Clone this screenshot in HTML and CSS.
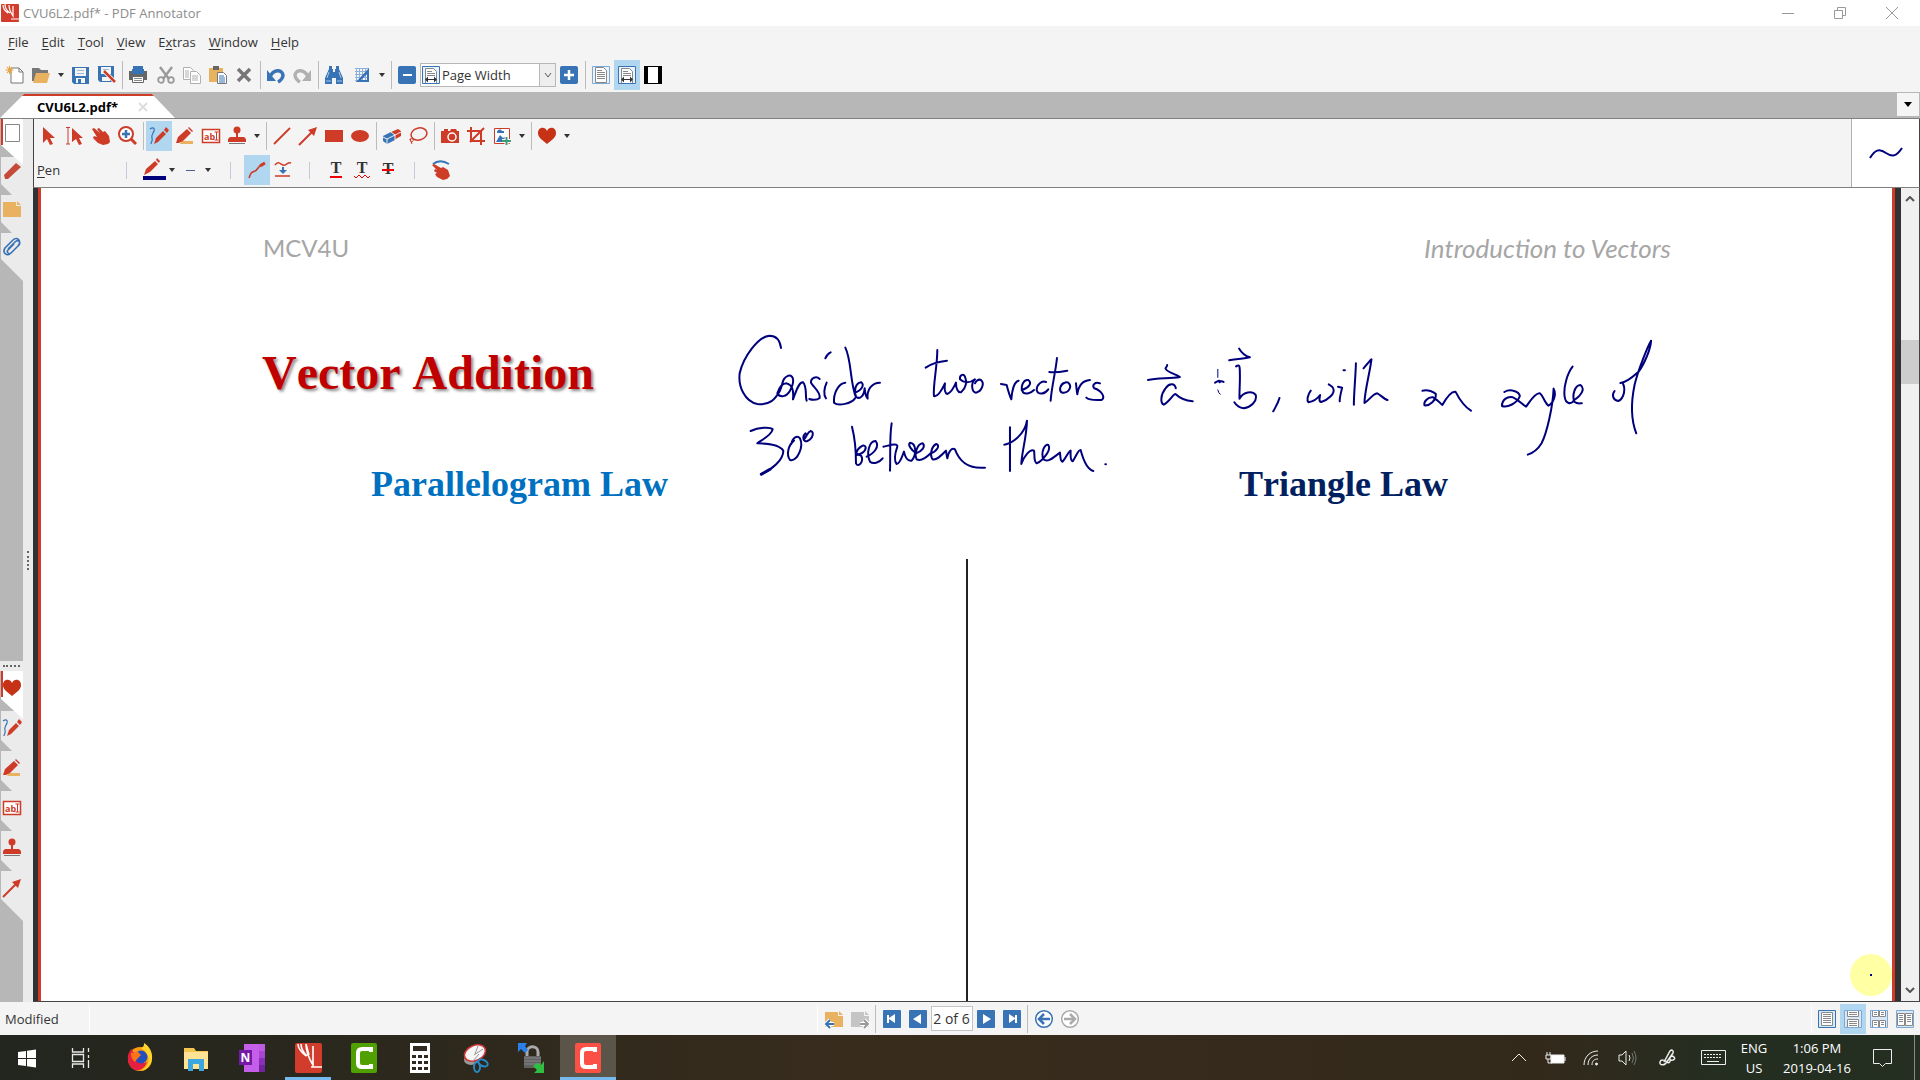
FILE: index.html
```html
<!DOCTYPE html>
<html lang="en">
<head>
<meta charset="utf-8">
<title>CVU6L2.pdf* - PDF Annotator</title>
<link rel="stylesheet" href="styles.css">
</head>
<body>
<svg class="sprite" aria-hidden="true">
  <symbol id="app" viewBox="0 0 20 20"><rect x="1" y="1" width="18" height="18" rx="1" fill="#d13c2c"/><path d="M3 2c0 4 2 6 5 8M5 1c0 4 2 7 5 9M9 2c0 5 2 8 4 11V3M11 16h8" fill="none" stroke="#fff" stroke-width="1.200"/></symbol>
  <symbol id="new" viewBox="0 0 20 20"><path d="M6 3h8l4 4v11H6z" fill="#fff" stroke="#777"/><path d="M14 3v4h4" fill="none" stroke="#777"/><path d="M4.500 1v8M.5 5h8M2 2l5 6M7 2L2 8" stroke="#e8a33a" stroke-width="1.100"/></symbol>
  <symbol id="open" viewBox="0 0 20 20"><path d="M1 3h7l2 2h7v4H6L3 16H1z" fill="#777"/><path d="M5 8h14l-3 10H2z" fill="#e8b261"/></symbol>
  <symbol id="save" viewBox="0 0 20 20"><path d="M2 2h17v17H4l-2-2z" fill="#3773b5"/><path d="M5 3h11v8H5zM6 13h9v5H6z" fill="#f4f4f4"/><path d="M7 5.500h7M7 8.500h7" stroke="#9bb8d8"/><path d="M8 14h3v4H8z" fill="#3773b5"/></symbol>
  <symbol id="saveas" viewBox="0 0 20 20"><path d="M2 1h16v16H4l-2-2z" fill="#3773b5"/><path d="M5 2h10v7H5zM6 12h8v4H6z" fill="#f4f4f4"/><path d="M7 4.500h6" stroke="#9bb8d8"/><path d="M9 7l9 9" stroke="#fff" stroke-width="4"/><path d="M8 6l11 11" stroke="#ce3b27" stroke-width="2.500"/></symbol>
  <symbol id="print" viewBox="0 0 20 20"><path d="M5 1h10v4H5z" fill="#3773b5"/><path d="M1 6h18v9H1z" fill="#666"/><path d="M4 4h12v5H4z" fill="#3773b5"/><path d="M4.500 11.500h11v6h-11z" fill="#fff" stroke="#666"/><path d="M6 13.500h8M6 15.500h8" stroke="#888"/></symbol>
  <symbol id="cut" viewBox="0 0 20 20"><path d="M4 2l9 12M16 2L7 14" stroke="#999" stroke-width="2.400"/><circle cx="5" cy="15" r="2.800" fill="none" stroke="#999" stroke-width="1.800"/><circle cx="15" cy="15" r="2.800" fill="none" stroke="#999" stroke-width="1.800"/></symbol>
  <symbol id="copy" viewBox="0 0 20 20"><g fill="#fff" stroke="#b0b0b0"><path d="M1.500 2.500h7l3 3v9h-10z"/><path d="M8.500 6.500h6l4 4v8h-10z"/></g><path d="M3 6h4M3 8h4M3 10h4M3 12h4M10 11h6M10 13h6M10 15h6" stroke="#b0b0b0"/></symbol>
  <symbol id="paste" viewBox="0 0 20 20"><path d="M1 3h14v14H1z" fill="#e8b261"/><path d="M5 1h6v4H5z" fill="#666"/><path d="M9.500 7.500h6l3 3v8h-9z" fill="#fff" stroke="#777"/><path d="M11 11h5M11 13h6M11 15h6M11 17h6" stroke="#3773b5"/></symbol>
  <symbol id="delete" viewBox="0 0 20 20"><path d="M4 4l12 12M16 4L4 16" stroke="#777" stroke-width="3.500"/></symbol>
  <symbol id="undo" viewBox="0 0 20 20"><path d="M4 12C7 4 16 4 17 10c0 3-3 6-5 7" fill="none" stroke="#3773b5" stroke-width="3.500"/><path d="M1 5v11h9z" fill="#3773b5"/></symbol>
  <symbol id="redo" viewBox="0 0 20 20"><path d="M16 12C13 4 4 4 3 10c0 3 3 6 5 7" fill="none" stroke="#b0b0b0" stroke-width="3.500"/><path d="M19 5v11h-9z" fill="#b0b0b0"/></symbol>
  <symbol id="find" viewBox="0 0 20 20"><path d="M5 1h3v3h1v3h2V4h1V1h3v3l4 9v6h-7v-6H8v6H1v-6l4-9z" fill="#3773b5"/><path d="M3 13l2-6M17 13l-2-6M2 16h5M13 16h5" stroke="#a9c6e6"/></symbol>
  <symbol id="grid" viewBox="0 0 20 20"><path d="M3 3.500h14M3 6.500h14M3 9.500h14M3 12.500h14M3 15.500h14M4.500 3v14M7.500 3v14M10.500 3v14M13.500 3v14" stroke="#8fb0d8"/><path d="M17 3v14H4zm-2 6l-6 6h6z" fill="#3773b5" fill-rule="evenodd"/></symbol>
  <symbol id="minus" viewBox="0 0 20 20"><rect x="1" y="1" width="18" height="18" rx="2" fill="#3773b5"/><path d="M6 10h9" stroke="#fff" stroke-width="2"/></symbol>
  <symbol id="plus" viewBox="0 0 20 20"><rect x="1" y="1" width="18" height="18" rx="2" fill="#3773b5"/><path d="M5 10h10M10 5v10" stroke="#fff" stroke-width="2.500"/></symbol>
  <symbol id="pwidth" viewBox="0 0 20 20"><path d="M1.500 1.500h17v17h-17z" fill="#eaf2fa" stroke="#3773b5"/><path d="M4.500 18V3.500h8l3 3V18" fill="#fff" stroke="#888"/><path d="M6 6.500h5M6 8.500h8M6 10.500h8" stroke="#888"/><path d="M5 14.500h10" stroke="#333"/><path d="M4 14.500l3-3v6zM16 14.500l-3-3v6z" fill="#333"/></symbol>
  <symbol id="ppage" viewBox="0 0 20 20"><path d="M1.500 1.500h17v17h-17z" fill="#eaf2fa" stroke="#7ea9d6"/><path d="M4.500 2.500h8l3 3v12h-11z" fill="#fff" stroke="#888"/><path d="M6 5.500h5M6 7.500h8M6 9.500h8M6 11.500h8M6 13.500h8" stroke="#888"/></symbol>
  <symbol id="pfull" viewBox="0 0 20 20"><path d="M1 1h18v18H1z"/><path d="M5 2h10v16H5z" fill="#fff"/></symbol>
  <symbol id="down" viewBox="0 0 8 8"><path d="M1 2h6L4 6z" fill="#333"/></symbol>
  <symbol id="cursor" viewBox="0 0 20 20"><path d="M4 1l12 11H11l3 6-3 1-3-6-4 4z" fill="#ce3b27"/></symbol>
  <symbol id="tcursor" viewBox="0 0 20 20"><path d="M1 1.500h4M3 1v17M1 18h4" stroke="#ce3b27"/><path d="M7 2l11 10h-4l3 6-3 1-3-6-4 3z" fill="#ce3b27"/></symbol>
  <symbol id="hand" viewBox="0 0 20 20"><path d="M1 3l2-1 6 5-3-4 2-1 4 4 2-1 4 5 1 6-2 2-5 1-5-2-5-5 1-2 3 1z" fill="#ce3b27"/></symbol>
  <symbol id="zoomin" viewBox="0 0 20 20"><circle cx="9" cy="8" r="7" fill="#fff" stroke="#ce3b27" stroke-width="2"/><path d="M14 13l5 5" stroke="#ce3b27" stroke-width="3"/><path d="M5 8h8M9 4v8" stroke="#3773b5" stroke-width="2.500"/></symbol>
  <symbol id="pen" viewBox="0 0 20 20"><path d="M1 3c3-2 5-1 4 2s-3 4-2 7-1 4-1 6" fill="none" stroke="#3773b5" stroke-width="1.200"/><path d="M5 18l2-6 7-7 3 3-8 8zM15 4l2-3 3 3-2 3z" fill="#ce3b27"/></symbol>
  <symbol id="marker" viewBox="0 0 20 20"><path d="M7 15h11v3H5z" fill="#e8b261"/><path d="M1 17l2-6 9-8 4 4-8 8-4 2zM13 2l1-1 4 4-1 1z" fill="#ce3b27"/></symbol>
  <symbol id="abl" viewBox="0 0 20 20"><rect x="1.500" y="3.500" width="17" height="13" fill="#fff" stroke="#ce3b27" stroke-width="1.500"/><text x="3" y="14" font-size="9" font-weight="700" fill="#ce3b27">ab</text><path d="M13.500 6h4M15.500 6v8M13.500 14h4" stroke="#ce3b27"/></symbol>
  <symbol id="stamp" viewBox="0 0 20 20"><circle cx="10" cy="4" r="3.500" fill="#ce3b27"/><path d="M9 6h2v5h6l2 2v3H1v-3l2-2h6z" fill="#ce3b27"/><path d="M2 17.500h16" stroke="#777"/></symbol>
  <symbol id="line" viewBox="0 0 20 20"><path d="M2 18L18 2" stroke="#ce3b27" stroke-width="1.800"/></symbol>
  <symbol id="arrow" viewBox="0 0 20 20"><path d="M1 19L15 5" stroke="#ce3b27" stroke-width="2"/><path d="M19 1l-3 9-6-6z" fill="#ce3b27"/></symbol>
  <symbol id="rect" viewBox="0 0 20 20"><path d="M1 4h18v12H1z" fill="#ce3b27"/></symbol>
  <symbol id="ellipse" viewBox="0 0 20 20"><ellipse cx="10" cy="10" rx="9" ry="6" fill="#ce3b27"/></symbol>
  <symbol id="eraser" viewBox="0 0 20 20"><path d="M9 6l7-3 3 2v5l-7 4-3-3z" fill="#ce3b27"/><path d="M1 10l8-4 4 3v5l-8 4-4-3z" fill="#3773b5"/><path d="M1 11l4 2v5M5 13l14-7M9 6l4 3v5" fill="none" stroke="#fff" stroke-width=".9"/></symbol>
  <symbol id="lasso" viewBox="0 0 20 20"><ellipse cx="11" cy="8" rx="8" ry="6" transform="rotate(-15 11 8)" fill="none" stroke="#ce3b27" stroke-width="1.500"/><path d="M2 13c2-1 4 0 3 2s-3 0-3-2l2 5" fill="none" stroke="#ce3b27"/></symbol>
  <symbol id="camera" viewBox="0 0 20 20"><path d="M1 5h3V3h4v2h2l1-2h5l1 2h2v12H1z" fill="#ce3b27"/><circle cx="12" cy="11" r="4" fill="#ce3b27" stroke="#fff" stroke-width="1.500"/></symbol>
  <symbol id="crop" viewBox="0 0 20 20"><path d="M1 5h14v14M5 1v14h14M4 16L18 2" fill="none" stroke="#ce3b27" stroke-width="2"/></symbol>
  <symbol id="image" viewBox="0 0 20 20"><path d="M2.500 2.500h15v15h-15z" fill="#fff" stroke="#ce3b27"/><path d="M4 16l4-7 3 3 3-2 2 3v3zM5 6c1-3 4-3 5-1h2v2H5z" fill="#3773b5"/><path d="M10 15h9M14.500 10v9" stroke="#fff" stroke-width="4"/><path d="M10 15h9M14.500 11v8" stroke="#3a9d78" stroke-width="2"/></symbol>
  <symbol id="heart" viewBox="0 0 20 20"><path d="M10 18C4 13 1 11 1 7c0-6 7-7 9-2 2-5 9-4 9 2 0 4-3 6-9 11z" fill="#c53216"/></symbol>
  <symbol id="colorpen" viewBox="0 0 24 24"><path d="M2 17l2-6 9-8 3 3-8 8zM14 2l1-2 3 3-1 2z" fill="#ce3b27"/><path d="M1 18h23v4H1z" fill="#00007c"/></symbol>
  <symbol id="dash" viewBox="0 0 20 20"><path d="M6 10.500h9" stroke="#4a5f92"/></symbol>
  <symbol id="curve" viewBox="0 0 20 20"><path d="M2 18c2-6 3-6 6-7s3-6 9-8" fill="none" stroke="#ce3b27" stroke-width="1.600"/><path d="M13 6l5-3" stroke="#ce3b27" stroke-width="3"/></symbol>
  <symbol id="smooth" viewBox="0 0 20 20"><path d="M2 5c4-6 7 2 10 0 2-1 4-3 6-2M2 16h15" fill="none" stroke="#ce3b27" stroke-width="1.500"/><path d="M9 7h2v3h3l-4 4-4-4h3z" fill="#3773b5"/></symbol>
  <symbol id="tline" viewBox="0 0 20 20"><text class="serif" x="10" y="13" font-size="16" text-anchor="middle" fill="#333">T</text><path d="M4 17h12" stroke="#e00" stroke-width="2"/></symbol>
  <symbol id="twave" viewBox="0 0 20 20"><text class="serif" x="10" y="13" font-size="16" text-anchor="middle" fill="#333">T</text><path d="M2 16l2 2 3-3 3 3 3-3 3 3 2-2" fill="none" stroke="#e00"/></symbol>
  <symbol id="tstrike" viewBox="0 0 20 20"><text class="serif" x="10" y="14" font-size="16" text-anchor="middle" fill="#333">T</text><path d="M4 10h12" stroke="#e00" stroke-width="2"/></symbol>
  <symbol id="touch" viewBox="0 0 20 20"><path d="M2 4c5-4 11-3 16 0" fill="none" stroke="#3773b5" stroke-width="2"/><path d="M1 5l2-1 7 4 2-1 5 3 2 6-3 3-4 1-6-3-2-3 2-1-3-2 1-2 2 1z" fill="#ce3b27"/></symbol>
  <symbol id="page" viewBox="0 0 20 20"><path d="M3.500 1.500h14v17h-14z" fill="#fff" stroke="#888"/></symbol>
  <symbol id="bookmark" viewBox="0 0 20 20"><path d="M2 14L14 2l5 4L6 18H3z" fill="#c54a38"/></symbol>
  <symbol id="note" viewBox="0 0 20 20"><path d="M1 3h13v4h5v11H1z" fill="#e8b261"/><path d="M15 2l4 4h-4z" fill="#e8b261"/></symbol>
  <symbol id="clip" viewBox="0 0 20 20"><path d="M6 12l7-7c3-3 6 0 4 3l-8 8c-4 4-9 0-6-5l8-8c4-4 9 1 5 6l-7 7c-2 2-5-1-3-3l6-6" fill="none" stroke="#3773b5" stroke-width="1.600"/></symbol>
  <symbol id="noteback" viewBox="0 0 20 20"><path d="M1 3h13v4h5v11H1z" fill="#e8b261"/><path d="M15 2l4 4h-4z" fill="#e8b261"/><path d="M10 15H3M6 11l-4 4 4 4" fill="none" stroke="#fff" stroke-width="4"/><path d="M10 15H3M6 11l-4 4 4 4" fill="none" stroke="#3773b5" stroke-width="2"/></symbol>
  <symbol id="notefwd" viewBox="0 0 20 20"><path d="M1 3h13v4h5v11H1z" fill="#c4c4c4"/><path d="M15 2l4 4h-4z" fill="#c4c4c4"/><path d="M10 15h7M14 11l4 4-4 4" fill="none" stroke="#fff" stroke-width="4"/><path d="M10 15h7M14 11l4 4-4 4" fill="none" stroke="#999" stroke-width="2"/></symbol>
  <symbol id="first" viewBox="0 0 20 20"><rect x="1" y="1" width="18" height="18" rx="1" fill="#3773b5"/><path d="M5 6h2v3l6-4v9l-6-4v4H5z" fill="#fff"/></symbol>
  <symbol id="prev" viewBox="0 0 20 20"><rect x="1" y="1" width="18" height="18" rx="1" fill="#3773b5"/><path d="M5 10l8-5v10z" fill="#fff"/></symbol>
  <symbol id="next" viewBox="0 0 20 20"><rect x="1" y="1" width="18" height="18" rx="1" fill="#3773b5"/><path d="M15 10L7 5v10z" fill="#fff"/></symbol>
  <symbol id="last" viewBox="0 0 20 20"><rect x="1" y="1" width="18" height="18" rx="1" fill="#3773b5"/><path d="M15 6h-2v3L7 5v9l6-4v4h2z" fill="#fff"/></symbol>
  <symbol id="back" viewBox="0 0 20 20"><circle cx="10" cy="10" r="8.300" fill="#fff" stroke="#3773b5" stroke-width="1.500"/><path d="M16 10H6M10 5l-5 5 5 5" fill="none" stroke="#3773b5" stroke-width="2.500"/></symbol>
  <symbol id="fwd" viewBox="0 0 20 20"><circle cx="10" cy="10" r="8.300" fill="#fff" stroke="#aaa" stroke-width="1.500"/><path d="M4 10h10M10 5l5 5-5 5" fill="none" stroke="#aaa" stroke-width="2.500"/></symbol>
  <symbol id="v1" viewBox="0 0 20 20"><path d="M1.500 1.500h17v17h-17z" fill="#d9e8f6" stroke="#3773b5"/><path d="M4.500 3.500h11v13h-11z" fill="#fff" stroke="#888"/><path d="M6 5.500h8M6 7.500h8M6 9.500h8M6 11.500h8M6 13.500h8" stroke="#888"/></symbol>
  <symbol id="v2" viewBox="0 0 20 20"><path d="M1.500 1.500h17v17h-17z" fill="#d9e8f6" stroke="#7ea9d6"/><path d="M4.500 2v5.500h11V2M4.500 18v-7.500h11V18" fill="#fff" stroke="#888"/><path d="M6 3.500h8M6 5.500h8M6 12.500h8M6 14.500h8M6 16.500h8" stroke="#888"/></symbol>
  <symbol id="v3" viewBox="0 0 20 20"><path d="M1.500 1.500h17v17h-17z" fill="#d9e8f6" stroke="#7ea9d6"/><path d="M3.500 2v5.500h6V2M10.500 2v5.500h6V2M3.500 18v-6.500h6V18M10.500 18v-6.500h6V18" fill="#fff" stroke="#888"/><path d="M5 3.500h3M12 3.500h3M5 5.500h3M12 5.500h3M5 13.500h3M12 13.500h3M5 15.500h3M12 15.500h3" stroke="#888"/></symbol>
  <symbol id="v4" viewBox="0 0 20 20"><path d="M1.500 1.500h17v17h-17z" fill="#d9e8f6" stroke="#7ea9d6"/><path d="M2.500 4.500h7v12h-7zM10.500 4.500h7v12h-7z" fill="#fff" stroke="#888"/><path d="M4 6.500h4M4 8.500h4M4 10.500h4M4 12.500h4M12 6.500h4M12 8.500h4M12 10.500h4M12 12.500h4" stroke="#888"/></symbol>
</svg>

<header class="titlebar">
  <svg class="ico"><use href="#app"/></svg>
  <span class="title">CVU6L2.pdf* - PDF Annotator</span>
  <div class="winbtns">
    <button aria-label="Minimize"><svg viewBox="0 0 12 12"><path d="M0 6.500h12"/></svg></button>
    <button aria-label="Restore"><svg viewBox="0 0 12 12"><path d="M.5 3.500h8v8h-8zM3.500 3V.5h8v8H9"/></svg></button>
    <button aria-label="Close"><svg viewBox="0 0 12 12"><path d="M0 0l12 12M12 0L0 12"/></svg></button>
  </div>
</header>

<nav class="menubar">
  <button><u>F</u>ile</button><button><u>E</u>dit</button><button><u>T</u>ool</button><button><u>V</u>iew</button><button>E<u>x</u>tras</button><button><u>W</u>indow</button><button><u>H</u>elp</button>
</nav>

<div class="toolbar main-tools">
  <button class="btn" aria-label="New"><svg class="ico"><use href="#new"/></svg></button>
  <button class="btn" aria-label="Open"><svg class="ico"><use href="#open"/></svg></button>
  <button class="drop" aria-label="Recent files"><svg><use href="#down"/></svg></button>
  <button class="btn" aria-label="Save"><svg class="ico"><use href="#save"/></svg></button>
  <button class="btn" aria-label="Save as"><svg class="ico"><use href="#saveas"/></svg></button>
  <i class="sep"></i>
  <button class="btn gap" aria-label="Print"><svg class="ico"><use href="#print"/></svg></button>
  <button class="btn" aria-label="Cut"><svg class="ico"><use href="#cut"/></svg></button>
  <button class="btn" aria-label="Copy"><svg class="ico"><use href="#copy"/></svg></button>
  <button class="btn" aria-label="Paste"><svg class="ico"><use href="#paste"/></svg></button>
  <button class="btn" aria-label="Delete"><svg class="ico"><use href="#delete"/></svg></button>
  <i class="sep"></i>
  <button class="btn" aria-label="Undo"><svg class="ico"><use href="#undo"/></svg></button>
  <button class="btn" aria-label="Redo"><svg class="ico"><use href="#redo"/></svg></button>
  <i class="sep"></i>
  <button class="btn gap" aria-label="Find"><svg class="ico"><use href="#find"/></svg></button>
  <button class="btn" aria-label="Background"><svg class="ico"><use href="#grid"/></svg></button>
  <button class="drop" aria-label="Background options"><svg><use href="#down"/></svg></button>
  <i class="sep"></i>
  <button class="btn" aria-label="Zoom out"><svg class="ico"><use href="#minus"/></svg></button>
  <div class="combo">
    <svg class="ico"><use href="#pwidth"/></svg>
    <select aria-label="Zoom"><option>Page Width</option></select>
    <span class="combo-arrow"><svg viewBox="0 0 8 8"><path d="M1 2l3 4 3-4"/></svg></span>
  </div>
  <button class="btn" aria-label="Zoom in"><svg class="ico"><use href="#plus"/></svg></button>
  <i class="sep"></i>
  <button class="btn" aria-label="Full page"><svg class="ico"><use href="#ppage"/></svg></button>
  <button class="btn on" aria-label="Page width"><svg class="ico"><use href="#pwidth"/></svg></button>
  <button class="btn" aria-label="Full screen"><svg class="ico"><use href="#pfull"/></svg></button>
</div>

<div class="tabs">
  <div class="tab"><span>CVU6L2.pdf*</span><button aria-label="Close tab"><svg viewBox="0 0 10 10"><path d="M1 1l8 8M9 1L1 9"/></svg></button></div>
  <button class="tablist" aria-label="Document list"><svg viewBox="0 0 10 6"><path d="M1 0h8L5 5z"/></svg></button>
</div>

<div class="work">
  <aside class="side">
    <div class="rail">
      <button class="stab sel" aria-label="Pages"><svg class="ico"><use href="#page"/></svg></button>
      <button class="stab" aria-label="Bookmarks"><svg class="ico"><use href="#bookmark"/></svg></button>
      <button class="stab" aria-label="Annotations"><svg class="ico"><use href="#note"/></svg></button>
      <button class="stab end" aria-label="Attachments"><svg class="ico"><use href="#clip"/></svg></button>
      <div class="fill"></div>
      <div class="hgrip"></div>
      <div class="favs">
        <button class="stab sel" aria-label="Favorites"><svg class="ico"><use href="#heart"/></svg></button>
        <button class="stab" aria-label="Pen"><svg class="ico"><use href="#pen"/></svg></button>
        <button class="stab" aria-label="Marker"><svg class="ico"><use href="#marker"/></svg></button>
        <button class="stab" aria-label="Text"><svg class="ico"><use href="#abl"/></svg></button>
        <button class="stab" aria-label="Stamp"><svg class="ico"><use href="#stamp"/></svg></button>
        <button class="stab end" aria-label="Arrow"><svg class="ico"><use href="#arrow"/></svg></button>
      </div>
    </div>
    <div class="splitter"><i></i></div>
  </aside>

  <main class="main">
    <div class="toolpanel">
      <div class="rows">
        <div class="toolbar">
          <button class="btn" aria-label="Select"><svg class="ico"><use href="#cursor"/></svg></button>
          <button class="btn" aria-label="Select text"><svg class="ico"><use href="#tcursor"/></svg></button>
          <button class="btn" aria-label="Pan"><svg class="ico"><use href="#hand"/></svg></button>
          <button class="btn" aria-label="Zoom"><svg class="ico"><use href="#zoomin"/></svg></button>
          <i class="sep"></i>
          <button class="btn on" aria-label="Pen"><svg class="ico"><use href="#pen"/></svg></button>
          <button class="btn" aria-label="Marker"><svg class="ico"><use href="#marker"/></svg></button>
          <button class="btn" aria-label="Text"><svg class="ico"><use href="#abl"/></svg></button>
          <button class="btn" aria-label="Stamp"><svg class="ico"><use href="#stamp"/></svg></button>
          <button class="drop" aria-label="Stamp options"><svg><use href="#down"/></svg></button>
          <i class="sep"></i>
          <button class="btn" aria-label="Line"><svg class="ico"><use href="#line"/></svg></button>
          <button class="btn" aria-label="Arrow"><svg class="ico"><use href="#arrow"/></svg></button>
          <button class="btn" aria-label="Rectangle"><svg class="ico"><use href="#rect"/></svg></button>
          <button class="btn" aria-label="Ellipse"><svg class="ico"><use href="#ellipse"/></svg></button>
          <i class="sep"></i>
          <button class="btn" aria-label="Eraser"><svg class="ico"><use href="#eraser"/></svg></button>
          <button class="btn" aria-label="Lasso"><svg class="ico"><use href="#lasso"/></svg></button>
          <i class="sep"></i>
          <button class="btn" aria-label="Snapshot"><svg class="ico"><use href="#camera"/></svg></button>
          <button class="btn" aria-label="Crop"><svg class="ico"><use href="#crop"/></svg></button>
          <button class="btn" aria-label="Insert image"><svg class="ico"><use href="#image"/></svg></button>
          <button class="drop" aria-label="Insert options"><svg><use href="#down"/></svg></button>
          <i class="sep"></i>
          <button class="btn" aria-label="Favorites"><svg class="ico"><use href="#heart"/></svg></button>
          <button class="drop" aria-label="Favorites options"><svg><use href="#down"/></svg></button>
        </div>
        <div class="toolbar props">
          <span class="toolname"><u>P</u>en</span>
          <i class="sep soft"></i>
          <button class="btn color" aria-label="Color"><svg class="ico-l"><use href="#colorpen"/></svg></button>
          <button class="drop" aria-label="Colors"><svg><use href="#down"/></svg></button>
          <button class="btn" aria-label="Line width"><svg class="ico"><use href="#dash"/></svg></button>
          <button class="drop wide" aria-label="Widths"><svg><use href="#down"/></svg></button>
          <i class="sep soft"></i>
          <button class="btn on before" aria-label="Freehand"><svg class="ico"><use href="#curve"/></svg></button>
          <button class="btn after" aria-label="Smooth"><svg class="ico"><use href="#smooth"/></svg></button>
          <i class="sep soft"></i>
          <button class="btn before" aria-label="Underline"><svg class="ico"><use href="#tline"/></svg></button>
          <button class="btn" aria-label="Squiggly"><svg class="ico"><use href="#twave"/></svg></button>
          <button class="btn after" aria-label="Strikeout"><svg class="ico"><use href="#tstrike"/></svg></button>
          <i class="sep soft"></i>
          <button class="btn before" aria-label="Touch"><svg class="ico"><use href="#touch"/></svg></button>
        </div>
      </div>
      <div class="preview"><svg viewBox="0 0 34 12"><path d="M1 11C6 3 10 1 17 6c6 4 10 4 16-5"/></svg></div>
    </div>

    <div class="viewer">
      <article class="page">
        <div class="runhead"><span>MCV4U</span><em>Introduction to Vectors</em></div>
        <h1>Vector Addition</h1>
        <div class="laws"><h2 class="par">Parallelogram Law</h2><h2 class="tri">Triangle Law</h2></div>
        <div class="divider"></div>
        <svg class="ink" viewBox="0 0 950 170" role="img" aria-label="Consider two vectors a and b, with an angle of 30 degrees between them.">
          <g transform="scale(.3333)">
            <path d="M183 84C180 60 168 47 148 47C115 50 70 110 59 160C54 200 75 245 112 252C150 256 165 238 180 212C190 190 185 175 205 167C225 165 222 190 210 212C200 230 180 235 172 220C180 195 190 190 200 190C215 195 222 205 219 238C228 215 236 186 249 187C262 200 255 230 260 242"/>
            <path d="M299 177C290 168 272 172 273 188C283 205 302 215 299 234C290 242 275 240 268 237M320 188C312 205 310 225 318 235M316 115C320 105 325 100 332 97"/>
            <path d="M376 188C355 190 340 220 342 248C355 260 395 250 405 235M376 83C395 120 390 190 408 232M403 218C425 212 434 195 424 187C408 188 400 210 408 230C420 240 432 228 434 205C435 220 440 235 443 236C440 210 455 188 480 188"/>
            <path d="M652 90C652 140 638 200 642 228C655 233 668 205 675 190C673 205 675 220 682 222C695 217 705 195 708 188C708 205 714 220 724 216C738 205 742 185 735 170C730 160 718 165 720 178C730 188 748 192 765 178C752 190 755 216 768 218C785 215 795 190 783 180C775 176 768 184 765 190M617 143C635 130 660 124 681 122"/>
            <path d="M843 192L860 195C864 210 868 225 874 238C876 215 882 185 896 182M905 210C925 205 938 190 925 180C908 178 900 205 910 218C918 224 932 220 942 210M978 186C965 180 950 195 950 210C955 227 975 222 985 208M1011 114C1008 150 995 200 992 242M988 156C1005 158 1025 155 1042 152M1035 188C1020 190 1015 215 1028 218C1048 220 1057 198 1045 188C1038 184 1028 190 1022 200M1068 190C1070 205 1070 215 1072 223C1075 200 1085 182 1110 180M1140 190C1125 185 1115 195 1123 205C1145 212 1157 232 1145 240C1125 240 1108 242 1099 233"/>
            <path d="M92 333C115 322 150 320 158 328C155 345 125 360 112 370C140 370 180 375 190 392C190 420 155 450 124 462"/><path d="M124 463L150 448" stroke-width="3"/>
            <path d="M222 362C205 375 198 405 210 420C232 425 252 380 240 355C232 345 218 352 214 372M257 340C245 350 250 367 262 363C280 355 283 335 272 333C264 335 262 345 254 356"/>
            <path d="M396 320C405 355 408 400 408 430C415 445 432 425 424 408C415 400 405 410 408 400C415 380 434 370 437 382C438 395 420 405 412 402M440 410C462 400 480 380 467 363C448 362 438 400 450 425C462 435 480 425 488 415M515 310C508 350 512 410 510 452M490 380C510 376 535 368 532 380C525 400 520 420 530 432C540 432 548 405 552 395C555 410 562 424 575 422C590 405 590 370 570 368C562 375 575 390 588 400C605 395 618 380 608 370C592 372 582 400 590 418C605 425 622 410 632 400C650 395 662 376 649 372C635 378 628 405 638 418C650 422 665 405 678 392C680 400 680 412 682 415C685 395 695 382 705 388C715 415 735 448 795 443"/>
            <path d="M870 322V453M853 374C880 370 915 340 921 302C920 350 905 400 904 432C912 410 930 385 942 392C945 400 940 425 950 430C965 425 996 390 985 375C975 370 962 395 970 418C985 430 1002 410 1020 398C1022 410 1020 425 1028 425C1040 410 1045 395 1052 392C1052 405 1050 422 1058 424C1068 410 1075 388 1082 390C1090 420 1100 448 1120 453M1156 433h2"/>
          </g>
          <g transform="translate(410) scale(.3444 .3333)">
            <path d="M52 180C80 174 115 176 145 171C130 162 105 155 103 145C106 140 108 138 108 135M133 205C130 190 115 188 103 205C88 225 88 250 98 254C115 245 125 222 132 222C145 235 160 242 182 244"/>
            <path d="M255 148v24M255 210Q257 220 262 223" stroke-width="1"/><path d="M247 188C260 180 262 182 260 187C262 182 268 183 272 186"/>
            <path d="M288 121C310 116 330 116 348 112C335 108 325 100 317 86M308 139C318 132 319 138 319 160C320 190 317 215 318 236C330 215 355 212 365 225C370 245 350 262 330 265C315 263 308 255 303 247M434 234C430 250 422 262 416 274"/>
            <path d="M525 212C515 225 513 242 518 247C530 245 545 235 552 225C550 235 548 245 555 246C575 240 597 220 590 205C588 198 580 195 577 193M604 200L616 203C612 220 608 235 609 244M620 151h4M656 130C655 170 650 220 650 254M678 145C690 130 698 120 701 118C698 150 680 220 681 249C695 240 705 222 718 220C728 225 738 238 748 240"/>
            <path d="M849 212C865 208 882 215 888 222C890 240 870 258 855 256C852 245 865 230 880 232C895 240 900 250 907 255C915 240 930 213 945 215C955 235 970 260 990 272"/>
            <path d="M1087 216C1105 205 1130 215 1132 228C1125 250 1095 264 1080 258C1080 240 1095 228 1112 232C1130 240 1140 255 1150 260C1158 250 1175 218 1190 220C1200 228 1205 250 1215 257C1228 250 1240 225 1230 206C1228 260 1210 340 1195 370C1182 392 1168 400 1155 404M1285 140C1270 160 1258 200 1262 230C1265 252 1280 255 1290 240C1312 225 1322 205 1308 195C1292 195 1283 225 1290 245C1298 252 1305 250 1312 250"/>
            <path d="M1407 213C1398 225 1402 240 1418 243C1435 235 1440 205 1430 188M1424 189C1450 185 1470 160 1477 155C1495 130 1512 85 1513 62C1505 75 1475 150 1465 195C1455 245 1455 300 1470 340"/>
          </g>
        </svg>
        <div class="pointer"></div>
      </article>
      <div class="scroll">
        <svg viewBox="0 0 10 6"><path d="M1 5l4-4 4 4"/></svg>
        <div class="track"><div class="thumb"></div></div>
        <svg viewBox="0 0 10 6"><path d="M1 1l4 4 4-4"/></svg>
      </div>
    </div>
  </main>
</div>

<footer class="status">
  <div class="st-left"><span>Modified</span><i class="sep faint"></i></div>
  <div class="st-mid">
    <i class="sep faint"></i>
    <button class="btn" aria-label="Previous note"><svg class="ico"><use href="#noteback"/></svg></button>
    <button class="btn" aria-label="Next note"><svg class="ico"><use href="#notefwd"/></svg></button>
    <i class="sep"></i>
    <button class="btn" aria-label="First page"><svg class="ico"><use href="#first"/></svg></button>
    <button class="btn" aria-label="Previous page"><svg class="ico"><use href="#prev"/></svg></button>
    <input class="pageno" aria-label="Page" value="2 of 6">
    <button class="btn" aria-label="Next page"><svg class="ico"><use href="#next"/></svg></button>
    <button class="btn" aria-label="Last page"><svg class="ico"><use href="#last"/></svg></button>
    <i class="sep"></i>
    <button class="btn" aria-label="Back"><svg class="ico"><use href="#back"/></svg></button>
    <button class="btn" aria-label="Forward"><svg class="ico"><use href="#fwd"/></svg></button>
  </div>
  <div class="st-right">
    <i class="sep faint"></i>
    <button class="btn" aria-label="Single page"><svg class="ico"><use href="#v1"/></svg></button>
    <button class="btn on" aria-label="Continuous"><svg class="ico"><use href="#v2"/></svg></button>
    <button class="btn" aria-label="Two pages continuous"><svg class="ico"><use href="#v3"/></svg></button>
    <button class="btn" aria-label="Two pages"><svg class="ico"><use href="#v4"/></svg></button>
  </div>
</footer>

<div class="taskbar">
  <div class="apps">
    <button class="task" aria-label="Start"><svg viewBox="0 0 32 32"><path d="M7 10l8-1v7H7zM16 8.800L25 7.500V16h-9zM7 17h8v7l-8-1zM16 17h9v8.500l-9-1.300z" fill="#fff"/></svg></button>
    <button class="task view" aria-label="Task View"><svg viewBox="0 0 32 32"><path d="M6.500 6v4h11V6M6.500 26v-4h11v4M6.500 12.500h11v7h-11zM22.500 6v4M22.500 13v3M22.500 18v8" fill="none" stroke="#e8e8e8" stroke-width="1.300"/></svg></button>
    <button class="task" aria-label="Firefox"><svg viewBox="0 0 32 32"><circle cx="16" cy="17" r="12" fill="#ff9a13"/><path d="M4 14c1-4 2-6 4-7l1 3 6 2-3 4c2 5 7 6 11 4-2 6-7 9-12 8-5-2-8-8-7-14z" fill="#e5203f"/><circle cx="17" cy="15" r="6.500" fill="#254fbe"/><path d="M17 6c3-1 3-3 3-5 5 3 9 9 8 16-1 7-6 11-11 12 8-5 9-12 6-17l-2-3z" fill="#ffd52b"/><path d="M7 11l7-1 3 3-4 4-2 3c-3-2-4-5-4-9z" fill="#ff7417"/></svg></button>
    <button class="task" aria-label="File Explorer"><svg viewBox="0 0 32 32"><path d="M4 6h10l2 3h12v18H4z" fill="#f5c64f"/><path d="M4 10h24v17H4z" fill="#ffe394"/><path d="M8 17h16v12h-5v-7h-6v7H8z" fill="#3ba7e0"/></svg></button>
    <button class="task" aria-label="OneNote"><svg viewBox="0 0 32 32"><path d="M8 2h21v28H8z" fill="#c55ee8"/><path d="M23 2h6v7h-6z" fill="#ba5be0"/><path d="M23 9h6v7h-6z" fill="#a845d2"/><path d="M23 16h6v7h-6z" fill="#8c2ebc"/><path d="M23 23h6v7h-6z" fill="#71239c"/><path d="M3 8h13v15H3z" fill="#7619a8"/><text x="9.500" y="20" font-size="12" font-weight="700" text-anchor="middle" fill="#fff">N</text></svg></button>
    <button class="task open" aria-label="PDF Annotator"><svg viewBox="0 0 32 32"><rect x="3" y="1" width="27" height="30" rx="2" fill="#d13c2c"/><path d="M6 2c0 4 3 8 8 12M9 2c0 5 2 8 6 12M14 2c0 6 2 13 7 21V4M14 2l3 11M19 25h11" fill="none" stroke="#fff" stroke-width="1.600"/></svg></button>
    <button class="task" aria-label="Camtasia"><svg viewBox="0 0 32 32"><rect x="3" y="1" width="26" height="30" rx="2" fill="#4fa000"/><path d="M23 10V7H14q-4 0-4 4v10q0 4 4 4h9v-3" fill="none" stroke="#fff" stroke-width="4"/></svg></button>
    <button class="task" aria-label="Calculator"><svg viewBox="0 0 32 32"><path d="M6 1h20v30H6z" fill="#fff"/><path d="M9 4h14v5H9z" fill="#302a20"/><path d="M8 13h4v3H8zM14 13h4v3h-4zM20 13h4v3h-4zM8 19h4v3H8zM14 19h4v3h-4zM20 19h4v3h-4zM8 25h4v3H8zM14 25h4v3h-4zM20 25h4v3h-4z" fill="#302a20"/></svg></button>
    <button class="task" aria-label="Snipping Tool"><svg viewBox="0 0 32 32"><ellipse cx="11" cy="18" rx="7" ry="5" fill="#999"/><ellipse cx="15" cy="11" rx="11" ry="7.500" transform="rotate(-25 15 11)" fill="#f5f5f5" stroke="#d03838" stroke-width="1.500"/><path d="M15 12l3-8M14 13l9-6M13 19l6-7" stroke="#999"/><ellipse cx="17" cy="25" rx="3" ry="5" fill="none" stroke="#2889c8" stroke-width="2"/><ellipse cx="23" cy="21" rx="5" ry="3" transform="rotate(25 23 21)" fill="none" stroke="#2889c8" stroke-width="2"/></svg></button>
    <button class="task" aria-label="Sync lock"><svg viewBox="0 0 32 32"><path d="M11 15V10c0-7 11-7 11 0v5" fill="none" stroke="#aaa" stroke-width="3"/><path d="M8 14h17v12H8z" fill="#606060"/><path d="M8 16h17M8 19h17M8 22h17" stroke="#888"/><path d="M2 1h9l-2 3 3 4-3 3-4-4-3 3z" fill="#2a80e8"/><path d="M28 19v12H18l3-3-4-4 4-3 4 2z" fill="#2fbd42"/></svg></button>
    <button class="task active" aria-label="Camtasia Recorder"><svg viewBox="0 0 32 32"><rect x="3" y="1" width="26" height="30" rx="2" fill="#fb5045"/><path d="M23 10V7H14q-4 0-4 4v10q0 4 4 4h9v-3" fill="none" stroke="#fff" stroke-width="4"/></svg></button>
  </div>
  <div class="tray">
    <svg viewBox="0 0 24 24"><path d="M5 15l7-7 7 7"/></svg>
    <svg viewBox="0 0 24 24"><path d="M8 9h13v8H8zM22 11v4" fill="#fff"/><path d="M3 9h5v4H3zM4 6v3M7 6v3M5 13v4h4"/></svg>
    <svg viewBox="0 0 24 24"><path d="M5 19C5 11 11 5 19 5M9 19C9 13 13 9 19 9M13 19C13 15 15 13 19 13"/><circle cx="17.500" cy="18" r="1" fill="#fff"/></svg>
    <svg viewBox="0 0 24 24"><path d="M4 9h3l4-4v14l-4-4H4zM14 9q2 3 0 6"/><path d="M17 7q3 5 0 10M19 5q4 7 0 14" stroke="#777"/></svg>
    <svg class="penws" viewBox="0 0 24 24"><path d="M9 16l6-11c2-2 4 0 3 2l-7 10c-2 3-7 2-6-1s5-2 7 0 4-1 3-3 2-4 4-2-1 4-4 3" stroke-width="1.500"/></svg>
    <svg class="kbd" viewBox="0 0 28 24"><path d="M2.500 4.500h24v14h-24z"/><path d="M5 8.500h18M5 11.500h18" stroke-dasharray="2 1"/><path d="M8 15.500h12"/></svg>
    <div class="clock lang"><span>ENG</span><span>US</span></div>
    <div class="clock"><time>1:06 PM</time><time>2019-04-16</time></div>
    <svg class="notif" viewBox="0 0 24 24"><path d="M3.500 3.500h18v14h-6l-3 3-3-3h-6z"/></svg>
    <i class="peek"></i>
  </div>
</div>
</body>
</html>
```
FILE: styles.css
```css
* { box-sizing: border-box; }
body { margin: 0; min-height: 100vh; display: flex; flex-direction: column; background: #f4f4f4; color: #333; font: 13px/18px "Open Sans", "Noto Sans", sans-serif; overflow: hidden; }
button, input, select { font: inherit; color: inherit; border: 0; margin: 0; padding: 0; background: none; }
svg { display: block; flex: none; }
.sprite { display: none; }
.serif { font-family: "Liberation Serif", serif; font-weight: 700; }
.ico { width: 20px; height: 20px; }
.ico-l { width: 24px; height: 24px; }

.titlebar { display: flex; align-items: center; height: 26px; background: #fff; color: #8c8c8c; }
.title { flex: 1; padding-left: 3px; }
.winbtns { display: flex; padding-right: 2px; }
.winbtns button { width: 52px; height: 26px; display: grid; place-items: center; }
.winbtns svg { width: 12px; height: 12px; fill: none; stroke: #999; }

.menubar { display: flex; gap: 13px; padding: 0 8px 2px; height: 34px; align-items: center; }
u { text-underline-offset: 2px; }

.toolbar { display: flex; align-items: center; height: 34px; }
.main-tools { height: 32px; padding: 0 0 2px 2px; }
.btn { width: 26px; height: 30px; display: flex; align-items: center; justify-content: center; flex: none; }
.on { background: #b1d6f0; }
.gap { margin-right: 2px; }
.drop { width: 13px; height: 30px; display: grid; place-items: center; flex: none; }
.drop svg { width: 8px; height: 8px; }
.sep { width: 6px; height: 28px; flex: none; background: linear-gradient(#bcbcbc, #bcbcbc) center / 1px 100% no-repeat; }
.soft { height: 17px; background-image: linear-gradient(#c3cad8, #c3cad8); }
.faint { background-image: linear-gradient(#fff, #fff); }
.combo { display: flex; align-items: center; width: 136px; height: 24px; border: 1px solid #b8b8b8; background: #fff; }
.combo select { appearance: none; flex: 1; min-width: 0; height: 22px; padding-left: 1px; }
.combo-arrow { width: 16px; height: 22px; display: grid; place-items: center; background: #eee; border-left: 1px solid #b8b8b8; pointer-events: none; }
.combo-arrow svg { width: 8px; height: 8px; fill: none; stroke: #555; }

.tabs { display: flex; justify-content: space-between; height: 27px; background: #b7b7b7; border-bottom: 1px solid #808080; }
.tab { width: 175px; margin-top: 2px; padding: 1px 0 0 37px; display: flex; align-items: center; gap: 21px; color: #000; font-weight: 700; background: linear-gradient(#ce3b27, #ce3b27) 0 0 / 100% 2px no-repeat #fff; clip-path: polygon(24px 0, 152px 0, 175px 100%, 0 100%); }
.tab span { width: 80px; white-space: nowrap; }
.tab svg { width: 10px; height: 10px; stroke: #ddd; fill: none; stroke-width: 2; }
.tablist { width: 22px; height: 23px; margin: 1px 1px 0 0; background: #f4f4f4; display: grid; place-items: center; }
.tablist svg { width: 10px; height: 6px; }

.work { display: flex; flex: 1; }
.side { display: flex; width: 33px; flex: none; }
.rail { width: 23px; display: flex; flex-direction: column; background: #b7b7b7; }
.stab { position: relative; width: 23px; height: 38px; flex: none; display: flex; align-items: flex-start; padding: 4px 0 0 2px; background: #ebebeb; clip-path: polygon(1px 0, 100% 0, 100% 100%, 12px 100%, 1px calc(100% - 11px)); }
.stab.sel { z-index: 1; height: 46px; margin-bottom: -8px; background: linear-gradient(#ce3b27, #ce3b27) 1px 0 / 2px 26px no-repeat #fff; clip-path: polygon(1px 0, 100% 0, 100% 100%, 1px calc(100% - 20px)); }
.stab.end { height: 48px; clip-path: polygon(1px 0, 100% 0, 100% 100%, 1px calc(100% - 22px)); }
.fill { flex: 1; }
.hgrip { height: 10px; padding: 4px 3px; background: #ebebeb; }
.hgrip::before { content: ""; display: block; border-top: 2px dotted #666; }
.favs { padding-bottom: 81px; }
.favs .stab { height: 40px; padding-top: 7px; }
.favs .stab.sel { height: 48px; }
.favs .stab.end { height: 50px; }
.splitter { width: 10px; background: #ebebeb; display: grid; place-items: center; }
.splitter i { height: 19px; border-left: 2px dotted #666; }

.main { flex: 1; min-width: 0; display: flex; flex-direction: column; }
.toolpanel { display: flex; border-left: 1px solid #444; border-right: 1px solid #444; border-bottom: 1px solid #808080; }
.rows { flex: 1; padding-left: 2px; }
.props .toolname { width: 87px; padding-left: 1px; }
.props .drop { width: 10px; }
.color { margin-left: 12px; }
.props .wide { margin-right: 14px; }
.after { margin-right: 10px; }
.before { margin-left: 11px; }
.preview { width: 68px; background: #fff; border-left: 1px solid #b0b0b0; display: grid; place-items: center; }
.preview svg { width: 34px; height: 12px; fill: none; stroke: #00007c; stroke-width: 2; }

.viewer { flex: 1; display: flex; background: #303234; padding-left: 5px; border-bottom: 1px solid #444; border-right: 1px solid #444; }
.page { position: relative; flex: 1; min-width: 0; display: flex; flex-direction: column; margin-right: 6px; background: #fff; border: solid #ce3b27; border-width: 0 3px; }
.runhead { display: flex; justify-content: space-between; padding: 44px 221px 0 222px; font: 24px/32px Lato, sans-serif; color: #a6a6a6; }
.runhead em { font-size: 26px; }
h1, h2 { margin: 0; font-family: "Liberation Serif", serif; font-weight: 700; font-kerning: none; }
h1 { padding: 81px 221px 0; font-size: 48px; line-height: 56px; color: #c00000; text-shadow: 2px 2px 3px #888; }
.laws { display: flex; justify-content: space-between; padding: 63px 444px 0 330px; }
h2 { font-size: 36px; line-height: 40px; }
.par { color: #0070c0; }
.tri { color: #002060; }
.divider { flex: 1; width: 2px; margin: 55px auto 0; background: #222; }
.ink { position: absolute; left: 679px; top: 132px; width: 950px; height: 170px; fill: none; stroke: #00007c; stroke-width: 2; stroke-linecap: round; stroke-linejoin: round; }
.ink path { vector-effect: non-scaling-stroke; }
.pointer { position: absolute; right: 0; bottom: 5px; width: 42px; height: 42px; border-radius: 50%; background: radial-gradient(#00007c 1px, #ffffa3 1px); }
.scroll { width: 18px; display: flex; flex-direction: column; align-items: center; background: #f0f0f0; padding: 8px 0; }
.scroll svg { width: 10px; height: 6px; fill: none; stroke: #555; stroke-width: 2; }
.track { flex: 1; align-self: stretch; padding-top: 138px; }
.thumb { height: 44px; background: #cdcdcd; }

.status { display: grid; grid-template-columns: 1fr auto 1fr; height: 33px; align-items: center; }
.st-left, .st-mid, .st-right { display: flex; align-items: center; }
.st-left span { width: 86px; padding-left: 5px; }
.st-mid { padding-right: 23px; }
.st-right { justify-content: flex-end; padding-right: 2px; }
.pageno { width: 42px; height: 25px; text-align: center; background: #fff; border: 1px solid #c4c4c4; font-size: 14px; }

.taskbar { display: flex; justify-content: space-between; height: 45px; color: #fff; background: linear-gradient(90deg, #22261f, #2c281d 20%, #382c1d 45%, #33291b 80%, #232e21 90%, #242e21); }
.apps, .tray { display: flex; }
.task { width: 56px; height: 45px; display: grid; place-items: center; }
.task svg { width: 32px; height: 32px; }
.task:first-child { width: 54px; }
.view { margin-right: 2px; }
.open { background: linear-gradient(#76b9ed, #76b9ed) center bottom / 46px 3px no-repeat; }
.active { border-bottom: 3px solid #76b9ed; background: #5b5549; padding-top: 3px; }
.tray { align-items: center; }
.tray svg { width: 24px; height: 24px; margin-right: 12px; fill: none; stroke: #eee; stroke-width: 1; }
.tray .penws { margin-left: 4px; }
.tray .kbd { width: 28px; margin: 0 12px 0 8px; }
.clock { display: flex; flex-direction: column; align-items: center; width: 72px; line-height: 20px; margin-right: 17px; white-space: nowrap; }
.lang { width: 30px; margin-right: 12px; }
.tray .notif { margin-right: 20px; }
.peek { width: 6px; height: 45px; border-left: 1px solid #888; }
```
